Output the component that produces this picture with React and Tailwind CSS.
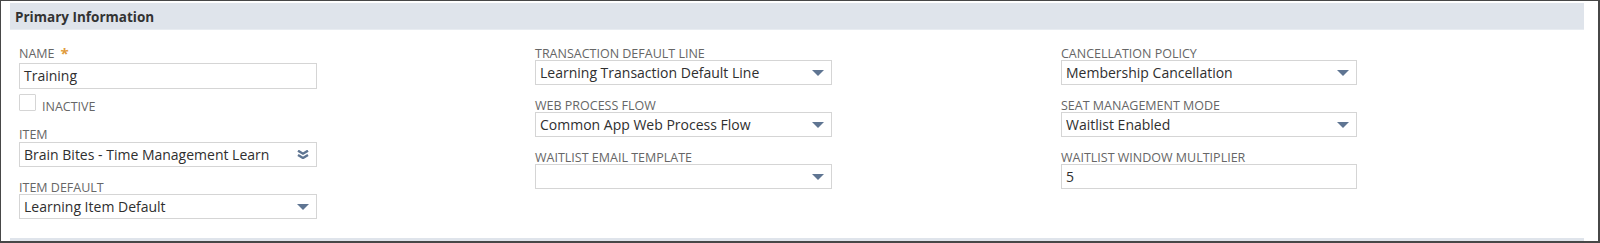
import React from "react";

const font = { fontFamily: '"Open Sans", "Liberation Sans", Arial, sans-serif' };

function Arrow() {
  return (
    <svg width="12" height="6" viewBox="0 0 12 6" className="shrink-0">
      <path d="M0 0 H12 L6 6 Z" fill="#5f7592" />
    </svg>
  );
}

function DoubleChevron() {
  return (
    <svg width="12" height="9" viewBox="0 0 12 9" className="shrink-0">
      <path d="M1 0.7 L6 3.7 L11 0.7" fill="none" stroke="#5f7592" strokeWidth="2.4" />
      <path d="M1 5 L6 8 L11 5" fill="none" stroke="#5f7592" strokeWidth="2.4" />
    </svg>
  );
}

function Label({ children, star }) {
  return (
    <div className="h-[16px] pt-[3px] flex items-start text-[12.5px] leading-[13px] text-[#666666] uppercase">
      <span>{children}</span>
      {star && <span className="ml-[6px] text-[#e09b3d] text-[15px] leading-[13px] font-bold">*</span>}
    </div>
  );
}

function Select({ value, double, w = "w-[297px]" }) {
  return (
    <div className={`h-[25px] ${w} border border-[#d5d5d5] bg-white flex items-center pl-[4px] pr-[7px]`}>
      <span className="flex-1 text-[14px] leading-[18px] text-[#2f2f2f] whitespace-nowrap overflow-hidden">{value}</span>
      {double ? <DoubleChevron /> : <Arrow />}
    </div>
  );
}

function TextInput({ value, h = "h-[25px]", w = "w-[297px]" }) {
  return (
    <div className={`${h} ${w} border border-[#d5d5d5] bg-white flex items-center pl-[4px]`}>
      <span className="text-[14px] leading-[18px] text-[#2f2f2f]">{value}</span>
    </div>
  );
}

export default function App() {
  return (
    <div
      className="w-[1600px] h-[243px] bg-white border-t border-l border-r-2 border-b-2 border-[#474747] flex flex-col"
      style={font}
    >
      <div className="flex-1 flex flex-col pl-[9px] pr-[14px] pt-[2px]">
        <div className="h-[27px] bg-[#dfe4eb] border-b border-[#e8ecf1] flex items-center pl-[5px] pt-[2px]">
          <span className="text-[13.5px] font-bold text-[#333333]">Primary Information</span>
        </div>
        <div className="flex-1 grid grid-cols-[516px_526px_1fr] pl-[9px] pt-[14px]">
          <div className="flex flex-col">
            <Label star>Name</Label>
            <div className="mt-[3px]">
              <TextInput value="Training" h="h-[26px]" w="w-[298px]" />
            </div>
            <div className="mt-[5px] h-[17px] flex items-start">
              <div className="w-[17px] h-[17px] shrink-0 border border-[#d5d5d5] bg-white rounded-[1px]" />
              <span className="ml-[6px] mt-[5px] text-[12.5px] leading-[16px] text-[#666666]">INACTIVE</span>
            </div>
            <div className="mt-[14px]">
              <Label>Item</Label>
            </div>
            <div className="mt-[1px]">
              <Select value="Brain Bites - Time Management Learn" double w="w-[298px]" />
            </div>
            <div className="mt-[11px]">
              <Label>Item Default</Label>
            </div>
            <Select value="Learning Item Default" w="w-[298px]" />
          </div>
          <div className="flex flex-col">
            <Label>Transaction Default Line</Label>
            <Select value="Learning Transaction Default Line" />
            <div className="mt-[11px]">
              <Label>Web Process Flow</Label>
            </div>
            <Select value="Common App Web Process Flow" />
            <div className="mt-[11px]">
              <Label>Waitlist Email Template</Label>
            </div>
            <Select value="" />
          </div>
          <div className="flex flex-col">
            <Label>Cancellation Policy</Label>
            <Select value="Membership Cancellation" w="w-[296px]" />
            <div className="mt-[11px]">
              <Label>Seat Management Mode</Label>
            </div>
            <Select value="Waitlist Enabled" w="w-[296px]" />
            <div className="mt-[11px]">
              <Label>Waitlist Window Multiplier</Label>
            </div>
            <TextInput value="5" w="w-[296px]" />
          </div>
        </div>
        <div className="h-[3px] bg-[#dfe4eb]" />
      </div>
    </div>
  );
}
